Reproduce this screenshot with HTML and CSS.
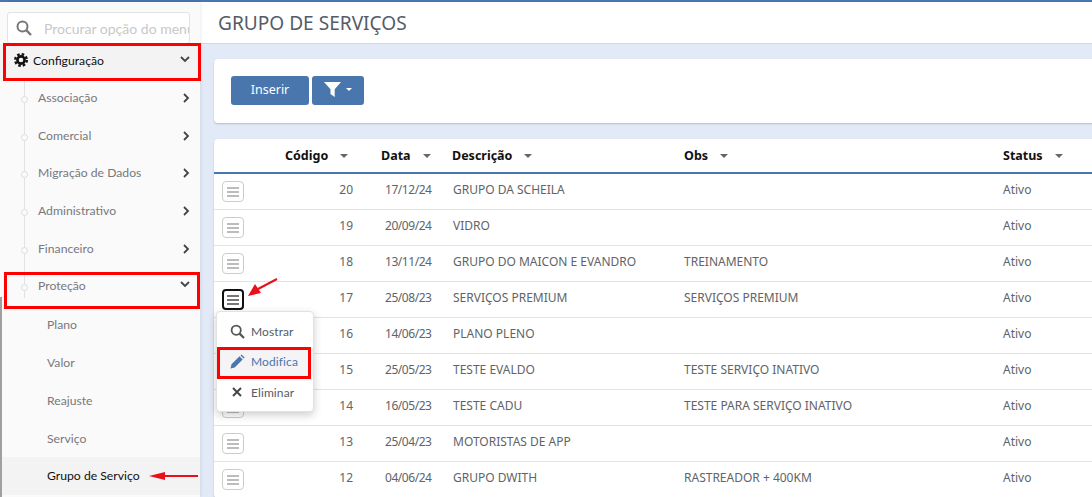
FILE: index.html
```html
<!DOCTYPE html>
<html lang="pt">
<head>
<meta charset="utf-8">
<title>Grupo de Serviços</title>
<link rel="stylesheet" href="styles.css">
</head>
<body>
<div class="app">
  <aside class="sidebar">
    <div class="search">
      <svg class="search-icon" width="16" height="16" viewBox="0 0 16 16"><circle cx="6.5" cy="6.5" r="5" fill="none" stroke="#777" stroke-width="2"/><path d="M10.2 10.2 15 15" stroke="#777" stroke-width="2.4"/></svg>
      <span class="search-text">Procurar opção do menu</span>
    </div>
    <nav class="menu">
      <div class="item top">
        <svg class="gear" width="14" height="14" viewBox="0 0 14 14"><circle cx="7" cy="7" r="3.6" fill="none" stroke="#111" stroke-width="2.6"/><circle cx="7" cy="7" r="5.8" fill="none" stroke="#111" stroke-width="2.4" stroke-dasharray="2.55 2"/></svg>
        <span class="label">Configuração</span>
        <svg class="chev" width="10" height="7" viewBox="0 0 10 7"><path d="M1 1l4 4 4-4" fill="none" stroke="#444" stroke-width="1.8"/></svg>
      </div>
      <div class="tree">
        <div class="item sub"><i class="dot"></i><span class="label">Associação</span><svg class="chev" width="7" height="10" viewBox="0 0 7 10"><path d="M1 1l4 4-4 4" fill="none" stroke="#444" stroke-width="1.8"/></svg></div>
        <div class="item sub"><i class="dot"></i><span class="label">Comercial</span><svg class="chev" width="7" height="10" viewBox="0 0 7 10"><path d="M1 1l4 4-4 4" fill="none" stroke="#444" stroke-width="1.8"/></svg></div>
        <div class="item sub"><i class="dot"></i><span class="label">Migração de Dados</span><svg class="chev" width="7" height="10" viewBox="0 0 7 10"><path d="M1 1l4 4-4 4" fill="none" stroke="#444" stroke-width="1.8"/></svg></div>
        <div class="item sub"><i class="dot"></i><span class="label">Administrativo</span><svg class="chev" width="7" height="10" viewBox="0 0 7 10"><path d="M1 1l4 4-4 4" fill="none" stroke="#444" stroke-width="1.8"/></svg></div>
        <div class="item sub"><i class="dot"></i><span class="label">Financeiro</span><svg class="chev" width="7" height="10" viewBox="0 0 7 10"><path d="M1 1l4 4-4 4" fill="none" stroke="#444" stroke-width="1.8"/></svg></div>
        <div class="item sub"><i class="dot"></i><span class="label">Proteção</span><svg class="chev" width="10" height="7" viewBox="0 0 10 7"><path d="M1 1l4 4 4-4" fill="none" stroke="#444" stroke-width="1.8"/></svg></div>
      </div>
      <div class="item leaf"><span class="label">Plano</span></div>
      <div class="item leaf"><span class="label">Valor</span></div>
      <div class="item leaf"><span class="label">Reajuste</span></div>
      <div class="item leaf"><span class="label">Serviço</span></div>
      <div class="item leaf current"><span class="label">Grupo de Serviço</span></div>
    </nav>
    <div class="scroll-thumb"></div>
  </aside>

  <main class="main">
    <header class="page-head"><h1>GRUPO DE SERVIÇOS</h1></header>
    <section class="card toolbar">
      <button class="btn insert">Inserir</button>
      <button class="btn filter">
        <svg width="17" height="15" viewBox="0 0 17 15"><path d="M0 0h17l-6.3 7.2V15l-4.2-3V7.2z" fill="#fff"/></svg>
        <i class="caret"></i>
      </button>
    </section>
    <section class="card grid-card">
      <table class="grid">
        <colgroup><col class="c-act"><col class="c-cod"><col class="c-dat"><col class="c-des"><col class="c-obs"><col class="c-sta"></colgroup>
        <thead>
          <tr>
            <th></th>
            <th class="h-cod">Código<i class="sort"></i></th>
            <th class="h-dat">Data<i class="sort"></i></th>
            <th class="h-des">Descrição<i class="sort"></i></th>
            <th class="h-obs">Obs<i class="sort"></i></th>
            <th>Status<i class="sort"></i></th>
          </tr>
        </thead>
        <tbody>
          <tr><td class="act"><span class="ham"><b></b><b></b><b></b></span></td><td class="num">20</td><td class="date">17/12/24</td><td>GRUPO DA SCHEILA</td><td></td><td>Ativo</td></tr>
          <tr><td class="act"><span class="ham"><b></b><b></b><b></b></span></td><td class="num">19</td><td class="date">20/09/24</td><td>VIDRO</td><td></td><td>Ativo</td></tr>
          <tr><td class="act"><span class="ham"><b></b><b></b><b></b></span></td><td class="num">18</td><td class="date">13/11/24</td><td>GRUPO DO MAICON E EVANDRO</td><td>TREINAMENTO</td><td>Ativo</td></tr>
          <tr><td class="act"><span class="ham active"><b></b><b></b><b></b></span></td><td class="num">17</td><td class="date">25/08/23</td><td>SERVIÇOS PREMIUM</td><td>SERVIÇOS PREMIUM</td><td>Ativo</td></tr>
          <tr><td class="act"><span class="ham"><b></b><b></b><b></b></span></td><td class="num">16</td><td class="date">14/06/23</td><td>PLANO PLENO</td><td></td><td>Ativo</td></tr>
          <tr><td class="act"><span class="ham"><b></b><b></b><b></b></span></td><td class="num">15</td><td class="date">25/05/23</td><td>TESTE EVALDO</td><td>TESTE SERVIÇO INATIVO</td><td>Ativo</td></tr>
          <tr><td class="act"><span class="ham"><b></b><b></b><b></b></span></td><td class="num">14</td><td class="date">16/05/23</td><td>TESTE CADU</td><td>TESTE PARA SERVIÇO INATIVO</td><td>Ativo</td></tr>
          <tr><td class="act"><span class="ham"><b></b><b></b><b></b></span></td><td class="num">13</td><td class="date">25/04/23</td><td>MOTORISTAS DE APP</td><td></td><td>Ativo</td></tr>
          <tr><td class="act"><span class="ham"><b></b><b></b><b></b></span></td><td class="num">12</td><td class="date">04/06/24</td><td>GRUPO DWITH</td><td>RASTREADOR + 400KM</td><td>Ativo</td></tr>
        </tbody>
      </table>
    </section>
  </main>
</div>

<div class="popup">
  <div class="pop-item"><svg width="15" height="15" viewBox="0 0 15 15"><circle cx="6.2" cy="6.2" r="4.6" fill="none" stroke="#555" stroke-width="1.8"/><path d="M9.6 9.6 14 14" stroke="#555" stroke-width="2.2"/></svg><span>Mostrar</span></div>
  <div class="pop-item on"><svg width="15" height="15" viewBox="0 0 15 15"><path d="M0.5 14.5l1-4.2 8-8 3.2 3.2-8 8zM10.5 1.4l1-1 3.2 3.2-1 1z" fill="#4a76ae"/></svg><span>Modifica</span></div>
  <div class="pop-item"><svg width="15" height="15" viewBox="0 0 15 15"><path d="M3 3l8 8M11 3l-8 8" stroke="#444" stroke-width="1.9" fill="none"/></svg><span>Eliminar</span></div>
</div>

<div class="mark m-conf"></div>
<div class="mark m-prot"></div>
<div class="mark m-mod"></div>
<svg class="arrow a-row" width="32" height="20" viewBox="0 0 32 20"><path d="M29 1 10 11" stroke="#e8101a" stroke-width="2"/><path d="M0 18 7 6l6 9z" fill="#e8101a"/></svg>
<svg class="arrow a-menu" width="50" height="10" viewBox="0 0 50 10"><path d="M14 5h35" stroke="#e8101a" stroke-width="2"/><path d="M0 5 16 1v8z" fill="#e8101a"/></svg>
</body>
</html>
```
FILE: styles.css
```css
* { box-sizing: border-box; }
html, body { margin: 0; height: 100%; overflow: hidden; }
body { font-family: "Noto Sans", "Open Sans", sans-serif; color: #555; background: #e1eaf6; position: relative; }

.app { display: flex; height: 497px; border-top: 2px solid #4a76ae; }

.sidebar { width: 200px; flex: none; background: #fafafa; padding: 10px 0 0 0; box-shadow: 1px 0 3px rgba(0,0,0,.08); position: relative; z-index: 1; }
.search { margin: 0 10px 0 7px; height: 32px; background: #fff; border: 1px solid #e3e3e3; border-radius: 3px; display: flex; align-items: center; padding-left: 8px; overflow: hidden; }
.search-icon { flex: none; margin-right: 12px; }
.search-text { font-family: Lato, sans-serif; font-size: 14px; color: #c8c8c8; white-space: nowrap; }
.scroll-thumb { position: absolute; left: 0; top: 295px; bottom: 0; width: 2px; background: #a0a0a0; }

.menu { font-family: Lato, "Noto Sans", sans-serif; font-size: 12.2px; }
.item { height: 37.7px; display: flex; align-items: center; position: relative; padding-bottom: 3px; }
.item .label { color: #78787d; }
.item .chev { position: absolute; right: 10px; top: 50%; margin-top: -6px; }
.top { height: 36px; background: #f3f3f3; padding-left: 14px; padding-bottom: 4px; }
.top .label { color: #111; margin-left: 5px; }
.top .chev { margin-top: -6px; }
.tree { position: relative; }
.tree::before { content: ""; position: absolute; left: 24px; top: 0; height: 218px; border-left: 1px solid #e2e2e2; }
.sub { padding-left: 38px; }
.dot { position: absolute; left: 21px; top: 50%; margin-top: -3px; width: 7px; height: 7px; border-radius: 50%; background: #fafafa; border: 1px solid #ddd; }
.leaf { padding-left: 47px; padding-bottom: 0; }
.current { background: #f3f3f3; }
.current .label { color: #111; }

.main { flex: 1; min-width: 0; overflow: hidden; }
.page-head { height: 42px; background: #fff; border-bottom: 1px solid #d8d8dc; padding-left: 18px; display: flex; align-items: center; }
.page-head h1 { margin: 0; font-size: 19.1px; font-weight: 400; color: #555c66; }

.card { background: #fff; margin: 15px -8px 0 14px; border-radius: 4px; box-shadow: 0 1px 2px rgba(0,0,0,.2); }
.toolbar { height: 64px; padding: 17px; display: flex; gap: 3px; }
.btn { height: 29px; border: 0; border-radius: 3px; background: #4a76ae; color: #fff; font: 12.5px "Noto Sans", sans-serif; display: flex; align-items: center; justify-content: center; padding: 0 0 2px; }
.insert { width: 78px; }
.filter { width: 52px; gap: 5px; }
.caret { width: 0; height: 0; border: 3px solid transparent; border-top-color: #fff; border-bottom: 0; }

.grid-card { margin-top: 16px; }
.grid { border-collapse: separate; border-spacing: 0; table-layout: fixed; width: 886px; font-size: 12px; }
.c-act { width: 60px; } .c-cod { width: 85px; } .c-dat { width: 86px; } .c-des { width: 231px; } .c-obs { width: 319px; }
th { height: 35px; padding: 0 0 0 8px; text-align: left; font-size: 12.5px; font-weight: 700; color: #111; border-bottom: 2px solid #4a76ae; }
.h-cod { padding-left: 11px; }
.h-dat { padding-left: 22px; }
.h-des { padding-left: 7px; }
.sort { display: inline-block; width: 0; height: 0; margin-left: 12px; vertical-align: 2px; border: 4px solid transparent; border-top: 4px solid #666; border-bottom: 0; }
td { height: 36px; padding: 0 0 5px 8px; border-bottom: 1px solid #e3e3e3; color: #606468; white-space: nowrap; }
td.act { padding: 0 0 0 8px; }
td.num { text-align: right; padding-right: 6px; }
td.date { padding-left: 26px; letter-spacing: -.45px; }
.ham { width: 22px; height: 21px; border: 1px solid #ccc; border-radius: 4px; background: #fff; display: flex; flex-direction: column; justify-content: center; align-items: center; gap: 2px; }
.ham b { display: block; width: 12px; height: 2px; background: #bcbcbc; }
.ham.active { border: 2px solid #111; }
.ham.active b { background: #777; }

.popup { position: absolute; left: 216px; top: 311px; width: 98px; height: 101px; background: #fff; border-radius: 4px; border: 1px solid #e2e2e2; box-shadow: 0 3px 8px rgba(0,0,0,.2); padding: 4px 0; z-index: 3; font-family: Lato, sans-serif; font-size: 12px; letter-spacing: .1px; }
.pop-item { height: 30.5px; display: flex; align-items: center; padding-left: 13px; gap: 6px; color: #555c66; }
.pop-item.on { color: #4a76ae; background: #f4f4f6; }

.mark { position: absolute; border: 3px solid #f00; z-index: 4; pointer-events: none; }
.m-conf { left: 3px; top: 43px; width: 198px; height: 38px; }
.m-prot { left: 4px; top: 272px; width: 196px; height: 37px; }
.m-mod { left: 217px; top: 347px; width: 94px; height: 32px; }
.arrow { position: absolute; z-index: 4; }
.a-row { left: 248px; top: 278px; }
.a-menu { left: 149px; top: 471px; }
```
